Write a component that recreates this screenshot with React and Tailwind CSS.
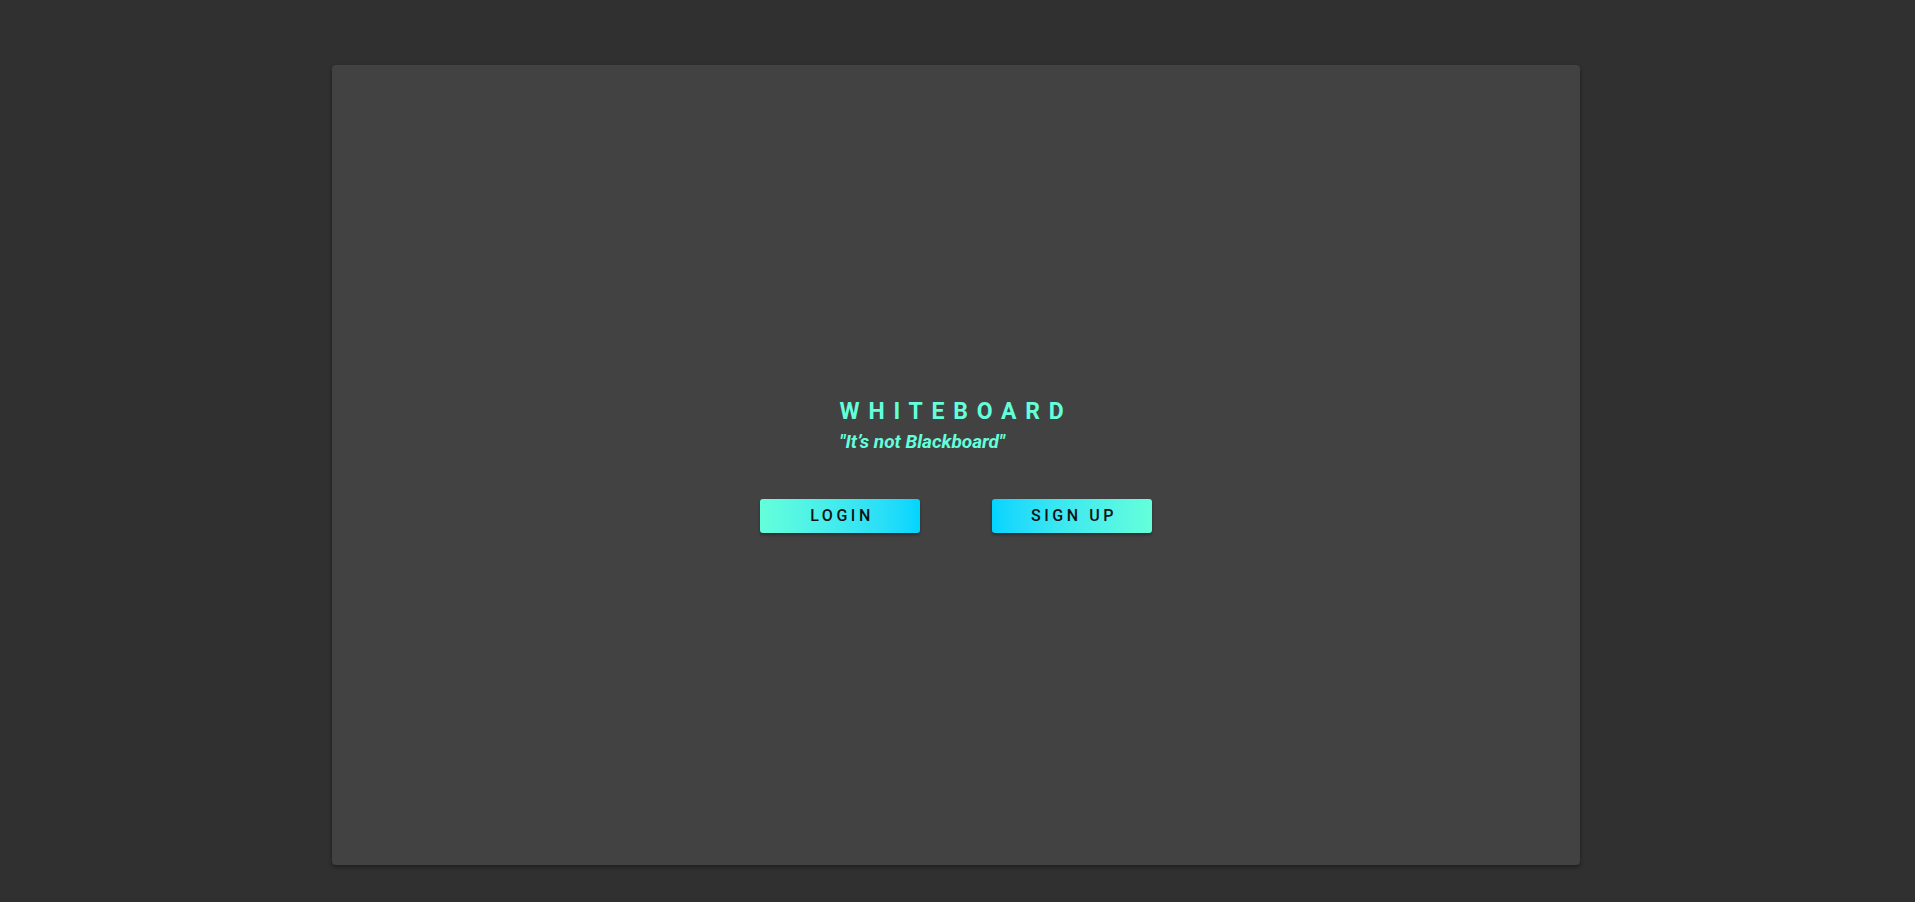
function GradientButton({ label, reverse }) {
  return (
    <button
      className={
        reverse
          ? "h-[34px] w-[160px] rounded-[3px] bg-gradient-to-r from-[#00d4ff] to-[#64ffda] pl-[4px] text-[16px] font-medium uppercase tracking-[0.22em] text-[#111] shadow-[0_2px_3px_rgba(0,0,0,0.35)]"
          : "h-[34px] w-[160px] rounded-[3px] bg-gradient-to-r from-[#64ffda] to-[#00d4ff] pl-[4px] text-[16px] font-medium uppercase tracking-[0.22em] text-[#111] shadow-[0_2px_3px_rgba(0,0,0,0.35)]"
      }
    >
      {label}
    </button>
  );
}

function App() {
  return (
    <div
      className="min-h-screen bg-[#303030] pt-[65px]"
      style={{ fontFamily: "Roboto, 'Noto Sans', sans-serif" }}
    >
      <div className="ml-[332px] flex h-[800px] w-[1248px] items-center justify-center rounded-[4px] bg-[#424242] shadow-[0_2px_4px_rgba(0,0,0,0.4)]">
        <div className="flex flex-col items-center">
          <div className="pt-[1px] text-left">
            <h1 className="text-[23px] font-bold leading-[27px] tracking-[0.38em] text-[#64ffda]">
              WHITEBOARD
            </h1>
            <p className="mt-[6px] text-[19px] font-bold italic leading-[22px] text-[#64ffda]">
              "It’s not Blackboard"
            </p>
          </div>
          <div className="mt-[46px] flex gap-[72px]">
            <GradientButton label="Login" />
            <GradientButton label="Sign up" reverse />
          </div>
        </div>
      </div>
    </div>
  );
}

export default App;
